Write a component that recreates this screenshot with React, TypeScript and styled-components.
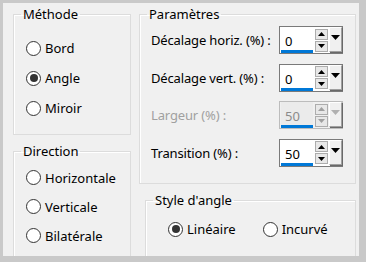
import styled, { createGlobalStyle } from 'styled-components';

const GlobalStyle = createGlobalStyle`
  html, body {
    margin: 0;
    padding: 0;
    background: #c9c9c9;
  }
  * {
    box-sizing: border-box;
  }
`;

const Frame = styled.div`
  width: 366px;
  height: 262px;
  padding: 3px 7px 6px 3px;
  background: #c9c9c9;
  font-family: 'Noto Sans', 'Open Sans', sans-serif;
  font-size: 13px;
  color: #000;
`;

const Panel = styled.div`
  height: 100%;
  overflow: hidden;
  background: #f0f0f0;
  padding: 3px 0 0 10px;
  display: grid;
  grid-template-columns: 118px 217px;
  column-gap: 8px;
`;

const Column = styled.div`
  display: flex;
  flex-direction: column;
  gap: ${({ $gap }: { $gap: number }) => $gap}px;
`;

const Group = styled.fieldset<{ $height: number; $indent?: number }>`
  margin: 0 0 0 ${({ $indent }) => $indent ?? 0}px;
  padding: 0 6px 0 7px;
  height: ${({ $height }) => $height}px;
  border: 1px solid #dcdcdc;
  box-shadow: inset 1px 1px 0 #ffffff;
  min-width: 0;
`;

const Legend = styled.legend`
  padding: 0 2px;
  line-height: 17px;
`;

const RadioList = styled.div`
  display: flex;
  flex-direction: column;
  padding: ${({ $top }: { $top: number }) => $top}px 0 0 5px;
`;

const RadioRow = styled.label<{ $height?: number }>`
  display: flex;
  align-items: center;
  gap: 4px;
  height: ${({ $height }) => $height ?? 30}px;
  white-space: nowrap;
`;

const RadioCircle = styled.span<{ $checked: boolean }>`
  width: 15px;
  height: 15px;
  border-radius: 50%;
  border: 1px solid #333333;
  background: #ffffff;
  display: flex;
  align-items: center;
  justify-content: center;
  flex-shrink: 0;

  &::after {
    content: '';
    width: 8px;
    height: 8px;
    border-radius: 50%;
    background: ${({ $checked }) => ($checked ? '#333333' : 'transparent')};
  }
`;

const ParamList = styled.div`
  display: flex;
  flex-direction: column;
  gap: 9.5px;
  padding: 3px 0 0 4px;
`;

const ParamRow = styled.div<{ $disabled?: boolean }>`
  display: flex;
  align-items: center;
  justify-content: space-between;
  height: 28px;
  padding-right: 6px;
  letter-spacing: -0.15px;
  color: ${({ $disabled }) => ($disabled ? '#a0a0a0' : '#000000')};
`;

const SpinBox = styled.div<{ $disabled?: boolean }>`
  display: flex;
  width: 64px;
  height: 28px;
  letter-spacing: 0;
  border: 1px solid ${({ $disabled }) => ($disabled ? '#bcbcbc' : '#7a7a7a')};
  background: ${({ $disabled }) => ($disabled ? '#f0f0f0' : '#ffffff')};
`;

const ValueField = styled.div<{ $disabled?: boolean }>`
  width: 34px;
  padding: 5px 0 0 4px;
  margin-left: 1px;
  border-bottom: 3px solid #0078d7;
  color: ${({ $disabled }) => ($disabled ? '#8a8a8a' : '#000000')};
  background: ${({ $disabled }) => ($disabled ? '#ebebeb' : '#ffffff')};
`;

const Arrows = styled.div`
  display: flex;
  flex-direction: column;
  justify-content: center;
  gap: 1px;
  margin-left: 2px;
`;

const ArrowButton = styled.div`
  width: 13px;
  height: 11px;
  border: 1px solid #adadad;
  background: #e8e8e8;
  display: flex;
  align-items: center;
  justify-content: center;
`;

const DropButton = styled.div`
  width: 14px;
  margin: 0 0 1px 1px;
  background: #f0f0f0;
  border-top: 1px solid #ffffff;
  border-left: 1px solid #ffffff;
  border-right: 1px solid #a0a0a0;
  border-bottom: 1px solid #a0a0a0;
  box-shadow: 1px 1px 0 #696969;
  display: flex;
  align-items: flex-start;
  justify-content: center;
  padding-top: 7px;
`;

const RadioLine = styled.div`
  display: flex;
  gap: 27px;
  padding: 5px 0 0 15px;
`;

const Triangle = ({ up, color }: { up?: boolean; color: string }) => (
  <svg width="7" height="4" viewBox="0 0 7 4">
    <polygon points={up ? '0,4 7,4 3.5,0' : '0,0 7,0 3.5,4'} fill={color} />
  </svg>
);

const BigTriangle = ({ color }: { color: string }) => (
  <svg width="9" height="5" viewBox="0 0 9 5">
    <polygon points="0,0 9,0 4.5,5" fill={color} />
  </svg>
);

const Radio = ({ label, checked, height }: { label: string; checked?: boolean; height?: number }) => (
  <RadioRow $height={height}>
    <RadioCircle $checked={!!checked} />
    {label}
  </RadioRow>
);

const Spin = ({ value, disabled }: { value: string; disabled?: boolean }) => {
  const c = disabled ? '#a0a0a0' : '#000000';
  return (
    <SpinBox $disabled={disabled}>
      <ValueField $disabled={disabled}>{value}</ValueField>
      <Arrows>
        <ArrowButton>
          <Triangle up color={c} />
        </ArrowButton>
        <ArrowButton>
          <Triangle color={c} />
        </ArrowButton>
      </Arrows>
      <DropButton>
        <BigTriangle color={disabled ? '#b0b0b0' : '#000000'} />
      </DropButton>
    </SpinBox>
  );
};

const params = [
  { label: 'Décalage horiz. (%) :', value: '0' },
  { label: 'Décalage vert. (%) :', value: '0' },
  { label: 'Largeur (%) :', value: '50', disabled: true },
  { label: 'Transition (%) :', value: '50' },
];

export default function App() {
  return (
    <>
      <GlobalStyle />
      <Frame>
        <Panel>
          <Column $gap={8}>
            <Group $height={129}>
              <Legend>Méthode</Legend>
              <RadioList $top={10}>
                <Radio label="Bord" />
                <Radio label="Angle" checked />
                <Radio label="Miroir" />
              </RadioList>
            </Group>
            <Group $height={140}>
              <Legend>Direction</Legend>
              <RadioList $top={3}>
                <Radio label="Horizontale" height={29} />
                <Radio label="Verticale" height={29} />
                <Radio label="Bilatérale" height={29} />
              </RadioList>
            </Group>
          </Column>
          <Column $gap={8}>
            <Group $height={178}>
              <Legend>Paramètres</Legend>
              <ParamList>
                {params.map((p) => (
                  <ParamRow key={p.label} $disabled={p.disabled}>
                    {p.label}
                    <Spin value={p.value} disabled={p.disabled} />
                  </ParamRow>
                ))}
              </ParamList>
            </Group>
            <Group $height={90} $indent={6}>
              <Legend>Style d'angle</Legend>
              <RadioLine>
                <Radio label="Linéaire" checked />
                <Radio label="Incurvé" />
              </RadioLine>
            </Group>
          </Column>
        </Panel>
      </Frame>
    </>
  );
}
